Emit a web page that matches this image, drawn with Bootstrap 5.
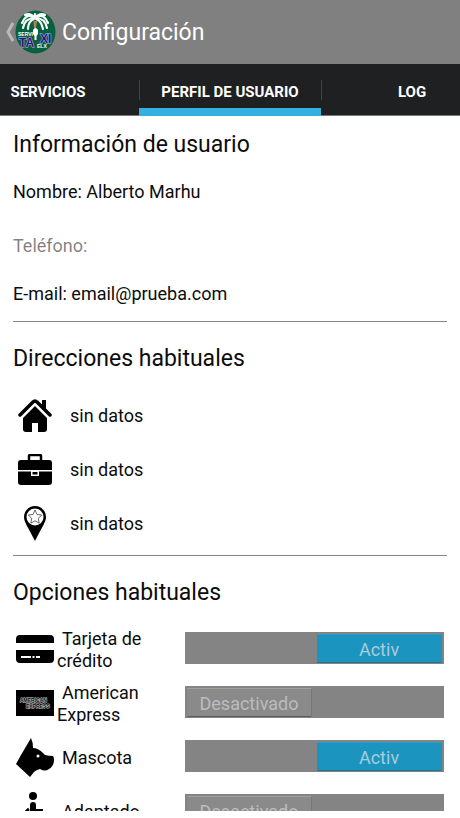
<!DOCTYPE html>
<html lang="es">
<head>
<meta charset="utf-8">
<meta name="viewport" content="width=device-width, initial-scale=1">
<title>Configuración</title>
<link href="https://cdn.jsdelivr.net/npm/bootstrap@5.3.0/dist/css/bootstrap.min.css" rel="stylesheet">
<style>
  body { font-family: Roboto, "Liberation Sans", sans-serif; font-size: 18px; line-height: 22px; color: #0c0c0c; background: #fff; }
  .screen { height: 100vh; padding-bottom: 7px; }
  .app-bar { height: 64px; background: #808080; padding-left: 5px; }
  .app-bar h1 { font-size: 23px; line-height: 32px; color: #fff; margin-left: 5px; padding-top: 2px; }
  .back { width: 10px; height: 32px; }
  .tab-strip { height: 52px; background: #1e2021; border-bottom: 1px solid #777; }
  .tab-strip .nav-item { flex: 0 0 182px; }
  .tab-strip .nav-link { height: 52px; padding: 4px 0 0; color: #fff; font-size: 15px; font-weight: 700; position: relative; }
  .tab-strip .nav-link.active { border-bottom: 8px solid #33b0e0; padding-top: 12px; }
  .tab-strip .nav-item + .nav-item .nav-link::before { content: ""; position: absolute; left: 0; top: 16px; height: 20px; width: 1px; background: #414445; }
  .content { padding: 0 13px; min-height: 0; }
  .content h2 { font-size: 23px; line-height: 32px; margin: 0; }
  .block + .block { border-top: 1px solid #858585; }
  .user-block { padding: 13px 0 16px; }
  .user-block p { margin: 0; }
  .user-block p:last-child { padding-top: 10px; }
  .places { padding: 21px 0 4px; }
  .options { padding: 21px 0 0; }
  .rows { padding-top: 14px; }
  .place-row, .option-row { height: 54px; }
  .icon-cell { flex: 0 0 44px; }
  .place-row .icon-cell { padding-bottom: 2px; }
  .place-row span { margin-left: 13px; }
  .option-label { flex: 0 0 128px; text-indent: 5px; padding-right: 24px; }
  .option-row .icon-cell { padding-bottom: 2px; }
  .track { height: 32px; background: #848484; padding: 2px 2px 1px; margin: 0 3px 4px 0; }
  .thumb { width: 49%; color: #bcbcbc; background: #8a8a8a; line-height: 30px; border-top: 1px solid #a0a0a0; border-bottom: 1px solid #5c5c5c; border-right: 1px solid #777; border-radius: 1px; }
  .thumb .on { display: none; }
  input:checked + .track { justify-content: flex-end; }
  input:checked + .track .thumb { background: #1c94c0; color: #a9ccda; border-color: #2d9dc5 #1c94c0 #2b718b; }
  input:checked + .track .on { display: inline; }
  input:checked + .track .off { display: none; }
  input:focus-visible + .track { outline: 2px solid #33b0e0; }
</style>
</head>
<body>
<div class="screen d-flex flex-column overflow-hidden">
  <header class="app-bar d-flex align-items-center flex-shrink-0">
    <a href="#" class="d-flex align-items-center" aria-label="Volver">
      <svg class="back" viewBox="0 0 10 32"><path d="M8 7 3 16l5 9" fill="none" stroke="#b9b9b9" stroke-width="3"/></svg>
      <svg width="42" height="44" viewBox="0 0 42 44" role="img" aria-label="Servi Taxi Elx">
        <ellipse cx="20.500" cy="22" rx="20" ry="21.500" fill="#07603f"/>
        <g fill="none" stroke="#f5fbf6" stroke-width="2.200" stroke-linecap="round">
          <path d="M20 8C13 3 9 8 7 13M20 8c7-5 11 0 13 5M20 8C13 8 9 12 8 18M20 8c7 0 11 4 12 10M19 9c-5 2-6 6-6 10M21 9c5 2 6 6 7 10M20 8c-3-4-7-5-10-3M20 8c3-4 7-5 10-3M20 8V4"/>
        </g>
        <path d="M18.500 11h3.500l-1 7h-2z" fill="#b77f55"/>
        <path d="M18 20q2.500-4 5 0v4l-1.500 2v4h-2v-4L18 24z" fill="#fff"/>
        <g font-family="Liberation Sans, sans-serif" font-weight="700">
          <text x="3" y="26" font-size="5" fill="#fff">SERVI</text>
          <text x="4" y="37" font-size="12" fill="#2b1687" stroke="#c4bde6" stroke-width="1" paint-order="stroke">TA</text>
          <text x="25" y="33" font-size="12" fill="#2b1687" stroke="#c4bde6" stroke-width="1" paint-order="stroke">XI</text>
          <text x="22" y="38" font-size="5" fill="#fff">ELX</text>
        </g>
      </svg>
    </a>
    <h1 class="mb-0 fw-normal">Configuración</h1>
  </header>

  <nav class="tab-strip flex-shrink-0">
    <ul class="nav flex-nowrap justify-content-center">
      <li class="nav-item"><a href="#" class="nav-link d-flex align-items-center justify-content-center">SERVICIOS</a></li>
      <li class="nav-item"><a href="#" class="nav-link active d-flex align-items-center justify-content-center" aria-current="page">PERFIL DE USUARIO</a></li>
      <li class="nav-item"><a href="#" class="nav-link d-flex align-items-center justify-content-center">LOG</a></li>
    </ul>
  </nav>

  <main class="content flex-grow-1 overflow-hidden">
    <section class="block user-block">
      <h2 class="fw-normal">Información de usuario</h2>
      <p class="pt-3 pb-3 mt-1">Nombre: Alberto Marhu</p>
      <p class="pt-3 pb-3 text-black-50">Teléfono:</p>
      <p>E-mail: email@prueba.com</p>
    </section>

    <section class="block places">
      <h2 class="fw-normal">Direcciones habituales</h2>
      <div class="rows">
        <div class="place-row d-flex align-items-center">
          <div class="icon-cell d-flex justify-content-center">
            <svg width="34" height="34" viewBox="0 0 34 34"><path d="M2 17 15 4q2-2 4 0l13 13" fill="none" stroke="#000" stroke-width="3.500" stroke-linecap="round"/><path d="M24 2h4v11l-4-4z"/><path d="M5 20 17 8l12 12v11q0 3-3 3h-6v-9h-6v9H8q-3 0-3-3z"/></svg>
          </div>
          <span>sin datos</span>
        </div>
        <div class="place-row d-flex align-items-center">
          <div class="icon-cell d-flex justify-content-center">
            <svg width="34" height="31" viewBox="0 0 34 31"><path d="M11 6V2q0-1 1-1h10q1 0 1 1v4" fill="none" stroke="#000" stroke-width="2.500"/><path d="M3 6h28q3 0 3 3v7H0V9q0-3 3-3zM0 17.500h13v4.500h8v-4.500h13V28q0 3-3 3H3q-3 0-3-3z"/><path d="M14.500 18h5v2.500h-5z"/></svg>
          </div>
          <span>sin datos</span>
        </div>
        <div class="place-row d-flex align-items-center">
          <div class="icon-cell d-flex justify-content-center">
            <svg width="22" height="35" viewBox="0 0 22 35"><path d="M11 0C5 0 0 5 0 11c0 5 4 10 11 24 7-14 11-19 11-24C22 5 17 0 11 0z"/><circle cx="11" cy="11" r="8.500" fill="#fff"/><path d="m11 4 2 4.500 4.800.500-3.500 3.300.900 4.900-4.200-2.400-4.200 2.400.900-4.900L4.200 9 9 8.500z" fill="#fff" stroke="#444" stroke-width=".8"/></svg>
          </div>
          <span>sin datos</span>
        </div>
      </div>
    </section>

    <section class="block options">
      <h2 class="fw-normal">Opciones habituales</h2>
      <div class="rows">
        <label class="option-row d-flex align-items-center">
          <span class="icon-cell d-flex justify-content-center">
            <svg width="38" height="28" viewBox="0 0 38 28"><path d="M4 0h30q4 0 4 4v4H0V4q0-4 4-4zM0 15h38v9q0 4-4 4H4q-4 0-4-4z"/><path d="M5 21h10v2H5zM16.500 21h2v2h-2zM20 21h4v2h-4z" fill="#fff"/></svg>
          </span>
          <span class="option-label">Tarjeta de crédito</span>
          <input type="checkbox" role="switch" class="visually-hidden" checked>
          <span class="track d-flex flex-grow-1"><span class="thumb text-center"><span class="on">Activ</span><span class="off">Desactivado</span></span></span>
        </label>
        <label class="option-row d-flex align-items-center">
          <span class="icon-cell d-flex justify-content-center">
            <svg width="38" height="26" viewBox="0 0 38 26"><rect width="38" height="26"/><g font-family="Liberation Sans, sans-serif" font-weight="700" font-size="5" fill="#000" stroke="#ccc" stroke-width="1" paint-order="stroke"><text x="4" y="12">AMERICAN</text><text x="10" y="18">EXPRESS</text></g></svg>
          </span>
          <span class="option-label">American Express</span>
          <input type="checkbox" role="switch" class="visually-hidden">
          <span class="track d-flex flex-grow-1"><span class="thumb text-center"><span class="on">Activ</span><span class="off">Desactivado</span></span></span>
        </label>
        <label class="option-row d-flex align-items-center">
          <span class="icon-cell d-flex justify-content-center">
            <svg width="38" height="39" viewBox="0 0 38 39"><path d="M15 0q2 4 2 10 5 0 10 5l2 2q4 1 8 1 1 1 1 4 0 6-5 9-4 3-9 0-4 1-6 3l-4 5L0 26l5-9z"/><circle cx="22" cy="18" r="1.500" fill="#fff"/></svg>
          </span>
          <span class="option-label">Mascota</span>
          <input type="checkbox" role="switch" class="visually-hidden" checked>
          <span class="track d-flex flex-grow-1"><span class="thumb text-center"><span class="on">Activ</span><span class="off">Desactivado</span></span></span>
        </label>
        <label class="option-row d-flex align-items-center">
          <span class="icon-cell d-flex justify-content-center">
            <svg width="32" height="38" viewBox="0 0 32 38"><circle cx="14" cy="4" r="4"/><path d="M11 19v-6q0-3 3-3t3 3v4h7v2h-7v3h7l5 9-3 1-4-7H11z"/><path d="M10 17a9 9 0 1 0 12 13" fill="none" stroke="#000" stroke-width="3"/></svg>
          </span>
          <span class="option-label">Adaptado</span>
          <input type="checkbox" role="switch" class="visually-hidden">
          <span class="track d-flex flex-grow-1"><span class="thumb text-center"><span class="on">Activ</span><span class="off">Desactivado</span></span></span>
        </label>
      </div>
    </section>
  </main>
</div>
<script src="https://cdn.jsdelivr.net/npm/bootstrap@5.3.0/dist/js/bootstrap.bundle.min.js"></script>
</body>
</html>
